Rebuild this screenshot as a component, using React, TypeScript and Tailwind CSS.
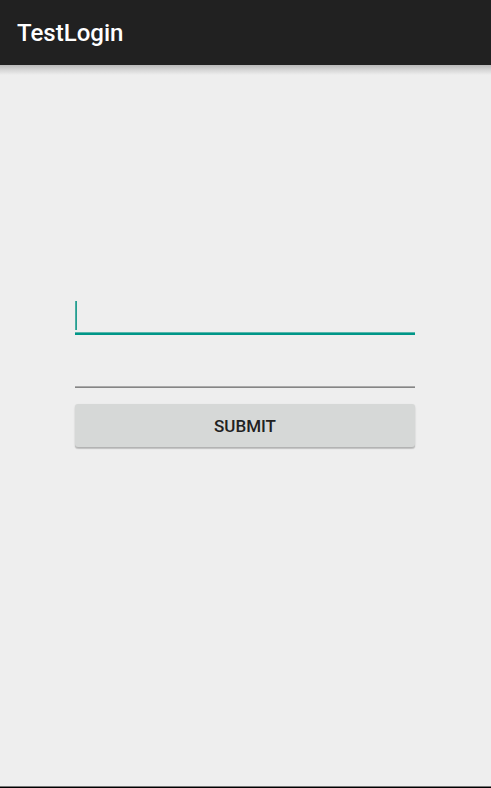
export default function App() {
  return (
    <div className="flex min-h-screen flex-col bg-[#eeeeee] font-['Roboto','Liberation_Sans',sans-serif] text-[#212121]">
      <header className="flex h-[65px] items-center bg-[#212121] px-[17px]">
        <h1 className="text-2xl font-medium text-white">TestLogin</h1>
      </header>
      <div className="h-[10px] bg-linear-to-b from-[#b9b9b9] via-[#d6d6d6] to-[#eeeeee]" />

      <main className="flex flex-1 flex-col pt-56 pr-[76px] pl-[75px]">
        <form className="flex flex-col" onSubmit={(event) => event.preventDefault()}>
          <div className="relative h-9 border-b-2 border-[#009688] shadow-[inset_0_-1px_0_#58b6ac]">
            <input
              type="text"
              aria-label="Username"
              className="h-full w-full bg-transparent text-xl caret-[#009688] outline-none"
            />
            <span className="pointer-events-none absolute left-0 top-[2px] h-[29px] w-[2px] bg-linear-to-r from-[#58b6ac] to-[#009688]" />
          </div>
          <input
            type="password"
            aria-label="Password"
            className="mt-4 h-[37px] border-b border-[#858585] bg-transparent text-xl caret-[#009688] shadow-[inset_0_-1px_0_#aaaaaa] outline-none"
          />
          <button
            type="submit"
            className="mt-4 h-[43px] rounded-[3px] bg-[#d6d8d7] pt-[2px] text-[17px] font-medium uppercase shadow-[0_1px_2px_rgba(0,0,0,0.15),0_2px_1px_rgba(0,0,0,0.15)]"
          >
            Submit
          </button>
        </form>
      </main>

      <footer className="h-[2px] border-t border-[#777777] bg-black" />
    </div>
  );
}
